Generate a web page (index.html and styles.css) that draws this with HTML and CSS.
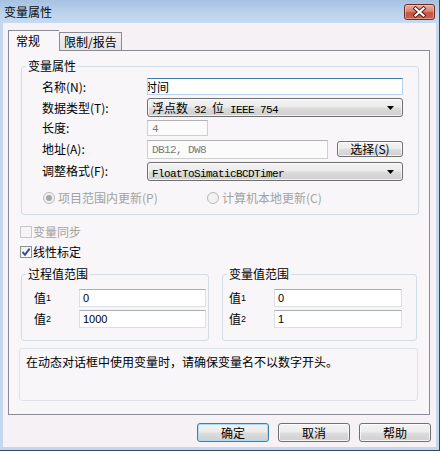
FILE: index.html
```html
<!DOCTYPE html>
<html lang="zh-CN">
<head>
<meta charset="utf-8">
<title>变量属性</title>
<link rel="stylesheet" href="styles.css">
</head>
<body>
<div class="window">
  <div class="titlebar">
    <span class="title">变量属性</span>
    <div class="close">
      <svg width="29" height="14" viewBox="0 0 29 14">
        <path d="M10.5 3.5 L18.5 10.5 M18.5 3.5 L10.5 10.5" stroke="#5a1a12" stroke-width="4" stroke-linecap="square" fill="none"/>
        <path d="M10.5 3.5 L18.5 10.5 M18.5 3.5 L10.5 10.5" stroke="#ffffff" stroke-width="2.2" stroke-linecap="square" fill="none"/>
      </svg>
    </div>
  </div>
  <div class="client">
    <div class="tabs">
      <div class="tab active">常规</div>
      <div class="tab">限制/报告</div>
    </div>
    <div class="panel">
      <fieldset class="group main-group">
        <legend>变量属性</legend>
        <div class="group-body main-body">
          <div class="row r1">
            <span class="lbl">名称(N):</span>
            <div class="edit focus wide"><span class="clip">时间</span></div>
          </div>
          <div class="row r2">
            <span class="lbl">数据类型(T):</span>
            <div class="combo wide">浮点数<span class="ss"> 32 </span>位<span class="ss"> IEEE 754</span>
              <svg class="arrow" width="7" height="4" viewBox="0 0 7 4"><path d="M0 0 H7 L3.5 4 Z" fill="#000"/></svg>
            </div>
          </div>
          <div class="row r3">
            <span class="lbl">长度:</span>
            <div class="edit disabled short"><span class="ss">4</span></div>
          </div>
          <div class="row r4">
            <span class="lbl">地址(A):</span>
            <div class="edit disabled addr"><span class="ss">DB12, DW8</span></div>
            <div class="btn select-btn">选择(S)</div>
          </div>
          <div class="row r5">
            <span class="lbl">调整格式(F):</span>
            <div class="combo wide"><span class="ss">FloatToSimaticBCDTimer</span>
              <svg class="arrow" width="7" height="4" viewBox="0 0 7 4"><path d="M0 0 H7 L3.5 4 Z" fill="#000"/></svg>
            </div>
          </div>
          <div class="radios">
            <div class="radio-item first"><span class="radio checked"></span><span class="dim">项目范围内更新(P)</span></div>
            <div class="radio-item"><span class="radio"></span><span class="dim">计算机本地更新(C)</span></div>
          </div>
        </div>
      </fieldset>

      <div class="check-row first-check"><span class="box disabled"></span><span class="dim">变量同步</span></div>
      <div class="check-row"><span class="box checked"><svg width="10" height="10" viewBox="0 0 10 10"><path d="M1.5 5 L4 7.8 L8.6 1.6" stroke="#2f4f8f" stroke-width="1.9" fill="none"/></svg></span><span>线性标定</span></div>

      <div class="ranges">
        <fieldset class="group range left">
          <legend>过程值范围</legend>
          <div class="group-body range-body">
            <div class="vrow"><span class="vl">值<span class="n">1</span></span><div class="edit val">0</div></div>
            <div class="vrow"><span class="vl">值<span class="n">2</span></span><div class="edit val">1000</div></div>
          </div>
        </fieldset>
        <fieldset class="group range right">
          <legend>变量值范围</legend>
          <div class="group-body range-body rb-right">
            <div class="vrow"><span class="vl">值<span class="n">1</span></span><div class="edit val">0</div></div>
            <div class="vrow"><span class="vl">值<span class="n">2</span></span><div class="edit val">1</div></div>
          </div>
        </fieldset>
      </div>

      <div class="note">在动态对话框中使用变量时，请确保变量名不以数字开头。</div>
    </div>
    <div class="buttons">
      <div class="btn dlg default">确定</div>
      <div class="btn dlg">取消</div>
      <div class="btn dlg">帮助</div>
    </div>
  </div>
</div>
</body>
</html>
```

FILE: styles.css
```css
* { box-sizing: border-box; margin: 0; padding: 0; }
html, body { background: #ffffff; }
body {
  width: 441px;
  height: 453px;
  overflow: hidden;
  font-family: "Noto Sans CJK SC", sans-serif;
  font-size: 12px;
  line-height: 14px;
  color: #000;
}

.window {
  width: 440px;
  height: 451px;
  background: #c3d7ee;
  border-right: 1px solid #34465c;
  border-bottom: 1px solid #34465c;
  display: flex;
  flex-direction: column;
  padding-bottom: 3px;
}

.titlebar {
  height: 23px;
  flex: none;
  display: flex;
  align-items: flex-start;
  background: linear-gradient(#a6c1e2, #bcd3ec 60%, #c6daf0);
  padding-left: 4px;
}
.title {
  margin-top: 5px;
  font-size: 12px;
  line-height: 14px;
  color: #0c0c0c;
}
.close {
  margin-left: auto;
  margin-right: 4px;
  margin-top: 4px;
  width: 31px;
  height: 16px;
  border: 1px solid #6e2c22;
  border-radius: 3px;
  background: linear-gradient(#e9ad9e 0%, #d98571 45%, #c7533e 55%, #c9624c 100%);
  box-shadow: inset 0 0 0 1px rgba(255, 220, 210, 0.45);
  display: flex;
  align-items: center;
  justify-content: center;
}
.close svg { display: block; }

.client {
  flex: 1;
  margin: 0 3px;
  background: #f5f1f5;
  padding: 7px 5px 0 5px;
}

.tabs {
  display: flex;
  align-items: flex-end;
  height: 20px;
  position: relative;
  z-index: 1;
}
.tab {
  height: 18px;
  border: 1px solid #898c95;
  border-bottom: none;
  background: linear-gradient(#f2f0f2, #e6e3e6);
  padding: 2px 4px 0 4px;
  width: 63px;
  line-height: 14px;
  white-space: nowrap;
}
.tab.active {
  height: 21px;
  width: 51px;
  margin-bottom: -1px;
  background: #f8f6f8;
  padding: 3px 0 0 7px;
  border-right: none;
}

.panel {
  width: 422px;
  height: 365px;
  border: 1px solid #898c95;
  background: #f8f6f8;
  display: flex;
  flex-direction: column;
}

.group {
  border: 1px solid #d3dde5;
  border-radius: 3px;
  padding: 0;
  min-width: 0;
}
.group legend {
  margin-left: 4px;
  padding: 0 2px;
  font-size: 12px;
  line-height: 14px;
}

.main-group {
  margin: 8px 0 0 12px;
  width: 398px;
}
.main-body { padding: 3px 15px 8px 20px; }

.row {
  display: flex;
  align-items: center;
  height: 21px;
}
.row.r3 { height: 20px; }
.row.r4 { height: 22px; }
.row.r5 { height: 22px; }
.lbl {
  width: 105px;
  flex: none;
  white-space: nowrap;
}

.edit {
  height: 17px;
  background: #ffffff;
  border: 1px solid #dbdfe6;
  border-top-color: #abadb3;
  padding-left: 3px;
  line-height: 15px;
  overflow: hidden;
  white-space: nowrap;
  font-family: "Liberation Sans", "Noto Sans CJK SC", sans-serif;
  font-size: 11px;
}
.edit.focus {
  border-color: #b5d2ee;
  border-top-color: #3d7bad;
  font-family: "Noto Sans CJK SC", sans-serif;
  font-size: 12px;
  padding-left: 0;
}
.clip { display: inline-block; margin-left: -3px; }
.edit.disabled {
  background: #fbfbfb;
  border-color: #cfcfcf;
  border-top-color: #b2b2b2;
  color: #7a7a7a;
  padding-left: 4px;
}
.wide { width: 256px; }
.short { width: 61px; height: 16px; }
.addr { width: 181px; height: 19px; line-height: 17px; }

.ss {
  font-family: "Liberation Mono", monospace;
  font-size: 11px;
  letter-spacing: -0.6px;
  white-space: pre;
}

.combo {
  position: relative;
  height: 19px;
  border: 1px solid #707070;
  border-radius: 3px;
  background: linear-gradient(#f3f3f3 0%, #ebebeb 48%, #dcdcdc 52%, #cfcfcf 100%);
  box-shadow: inset 0 0 0 1px rgba(255, 255, 255, 0.7);
  padding-left: 4px;
  line-height: 17px;
  white-space: nowrap;
}
.arrow {
  position: absolute;
  right: 8px;
  top: 7px;
  display: block;
}

.btn {
  height: 19px;
  border: 1px solid #707070;
  border-radius: 3px;
  background: linear-gradient(#f3f3f3 0%, #ebebeb 48%, #dddddd 52%, #cfcfcf 100%);
  box-shadow: inset 0 0 0 1px rgba(255, 255, 255, 0.75);
  text-align: center;
  line-height: 17px;
  white-space: nowrap;
}
.select-btn {
  width: 66px;
  height: 16px;
  line-height: 14px;
  margin-left: 9px;
}

.radios {
  display: flex;
  align-items: center;
  height: 16px;
  margin-top: 8px;
}
.radio-item {
  display: flex;
  align-items: center;
}
.radio-item.first { width: 164px; margin-left: 1px; }
.radio {
  width: 12px;
  height: 12px;
  border: 1px solid #b9b9b9;
  border-radius: 50%;
  background: #f1f1f1;
  margin-right: 3px;
  position: relative;
  flex: none;
}
.radio.checked::after {
  content: "";
  position: absolute;
  left: 2px;
  top: 2px;
  width: 6px;
  height: 6px;
  border-radius: 50%;
  background: #a6a6a6;
}
.dim { color: #a2a2a2; }

.check-row {
  display: flex;
  align-items: center;
  height: 20px;
  margin-left: 11px;
}
.check-row.first-check { margin-top: 7px; }
.box {
  width: 12px;
  height: 12px;
  margin-right: 1px;
  border: 1px solid #8f8f8f;
  background: linear-gradient(135deg, #f0f0f0, #ffffff);
  display: flex;
  align-items: center;
  justify-content: center;
  flex: none;
}
.box.disabled { border-color: #c8c8c8; background: #f4f4f4; }
.box svg { display: block; }

.ranges {
  display: flex;
  margin-top: 5px;
}
.range.left { margin-left: 12px; width: 188px; }
.range.right { margin-left: 13px; width: 195px; }
.range-body { padding: 6px 2px 11px 12px; }
.range-body.rb-right { padding-left: 6px; }
.vrow {
  display: flex;
  align-items: center;
  height: 21px;
}
.vl { width: 45px; flex: none; }
.vl .n {
  font-family: "Liberation Sans", sans-serif;
  font-size: 9px;
  vertical-align: 2px;
}
.val { width: 128px; height: 18px; line-height: 16px; }

.note {
  margin: 7px 0 0 10px;
  width: 399px;
  height: 53px;
  border: 1px solid #dbe2ea;
  border-radius: 3px;
  padding: 5px 6px;
  line-height: 16px;
}

.buttons {
  display: flex;
  justify-content: flex-end;
  gap: 9px;
  margin-top: 8px;
  padding-right: 0;
}
.dlg { width: 72px; }
.dlg.default {
  border-color: #3c7fb1;
  box-shadow: inset 0 0 0 1px #a9dcf8;
}
```
